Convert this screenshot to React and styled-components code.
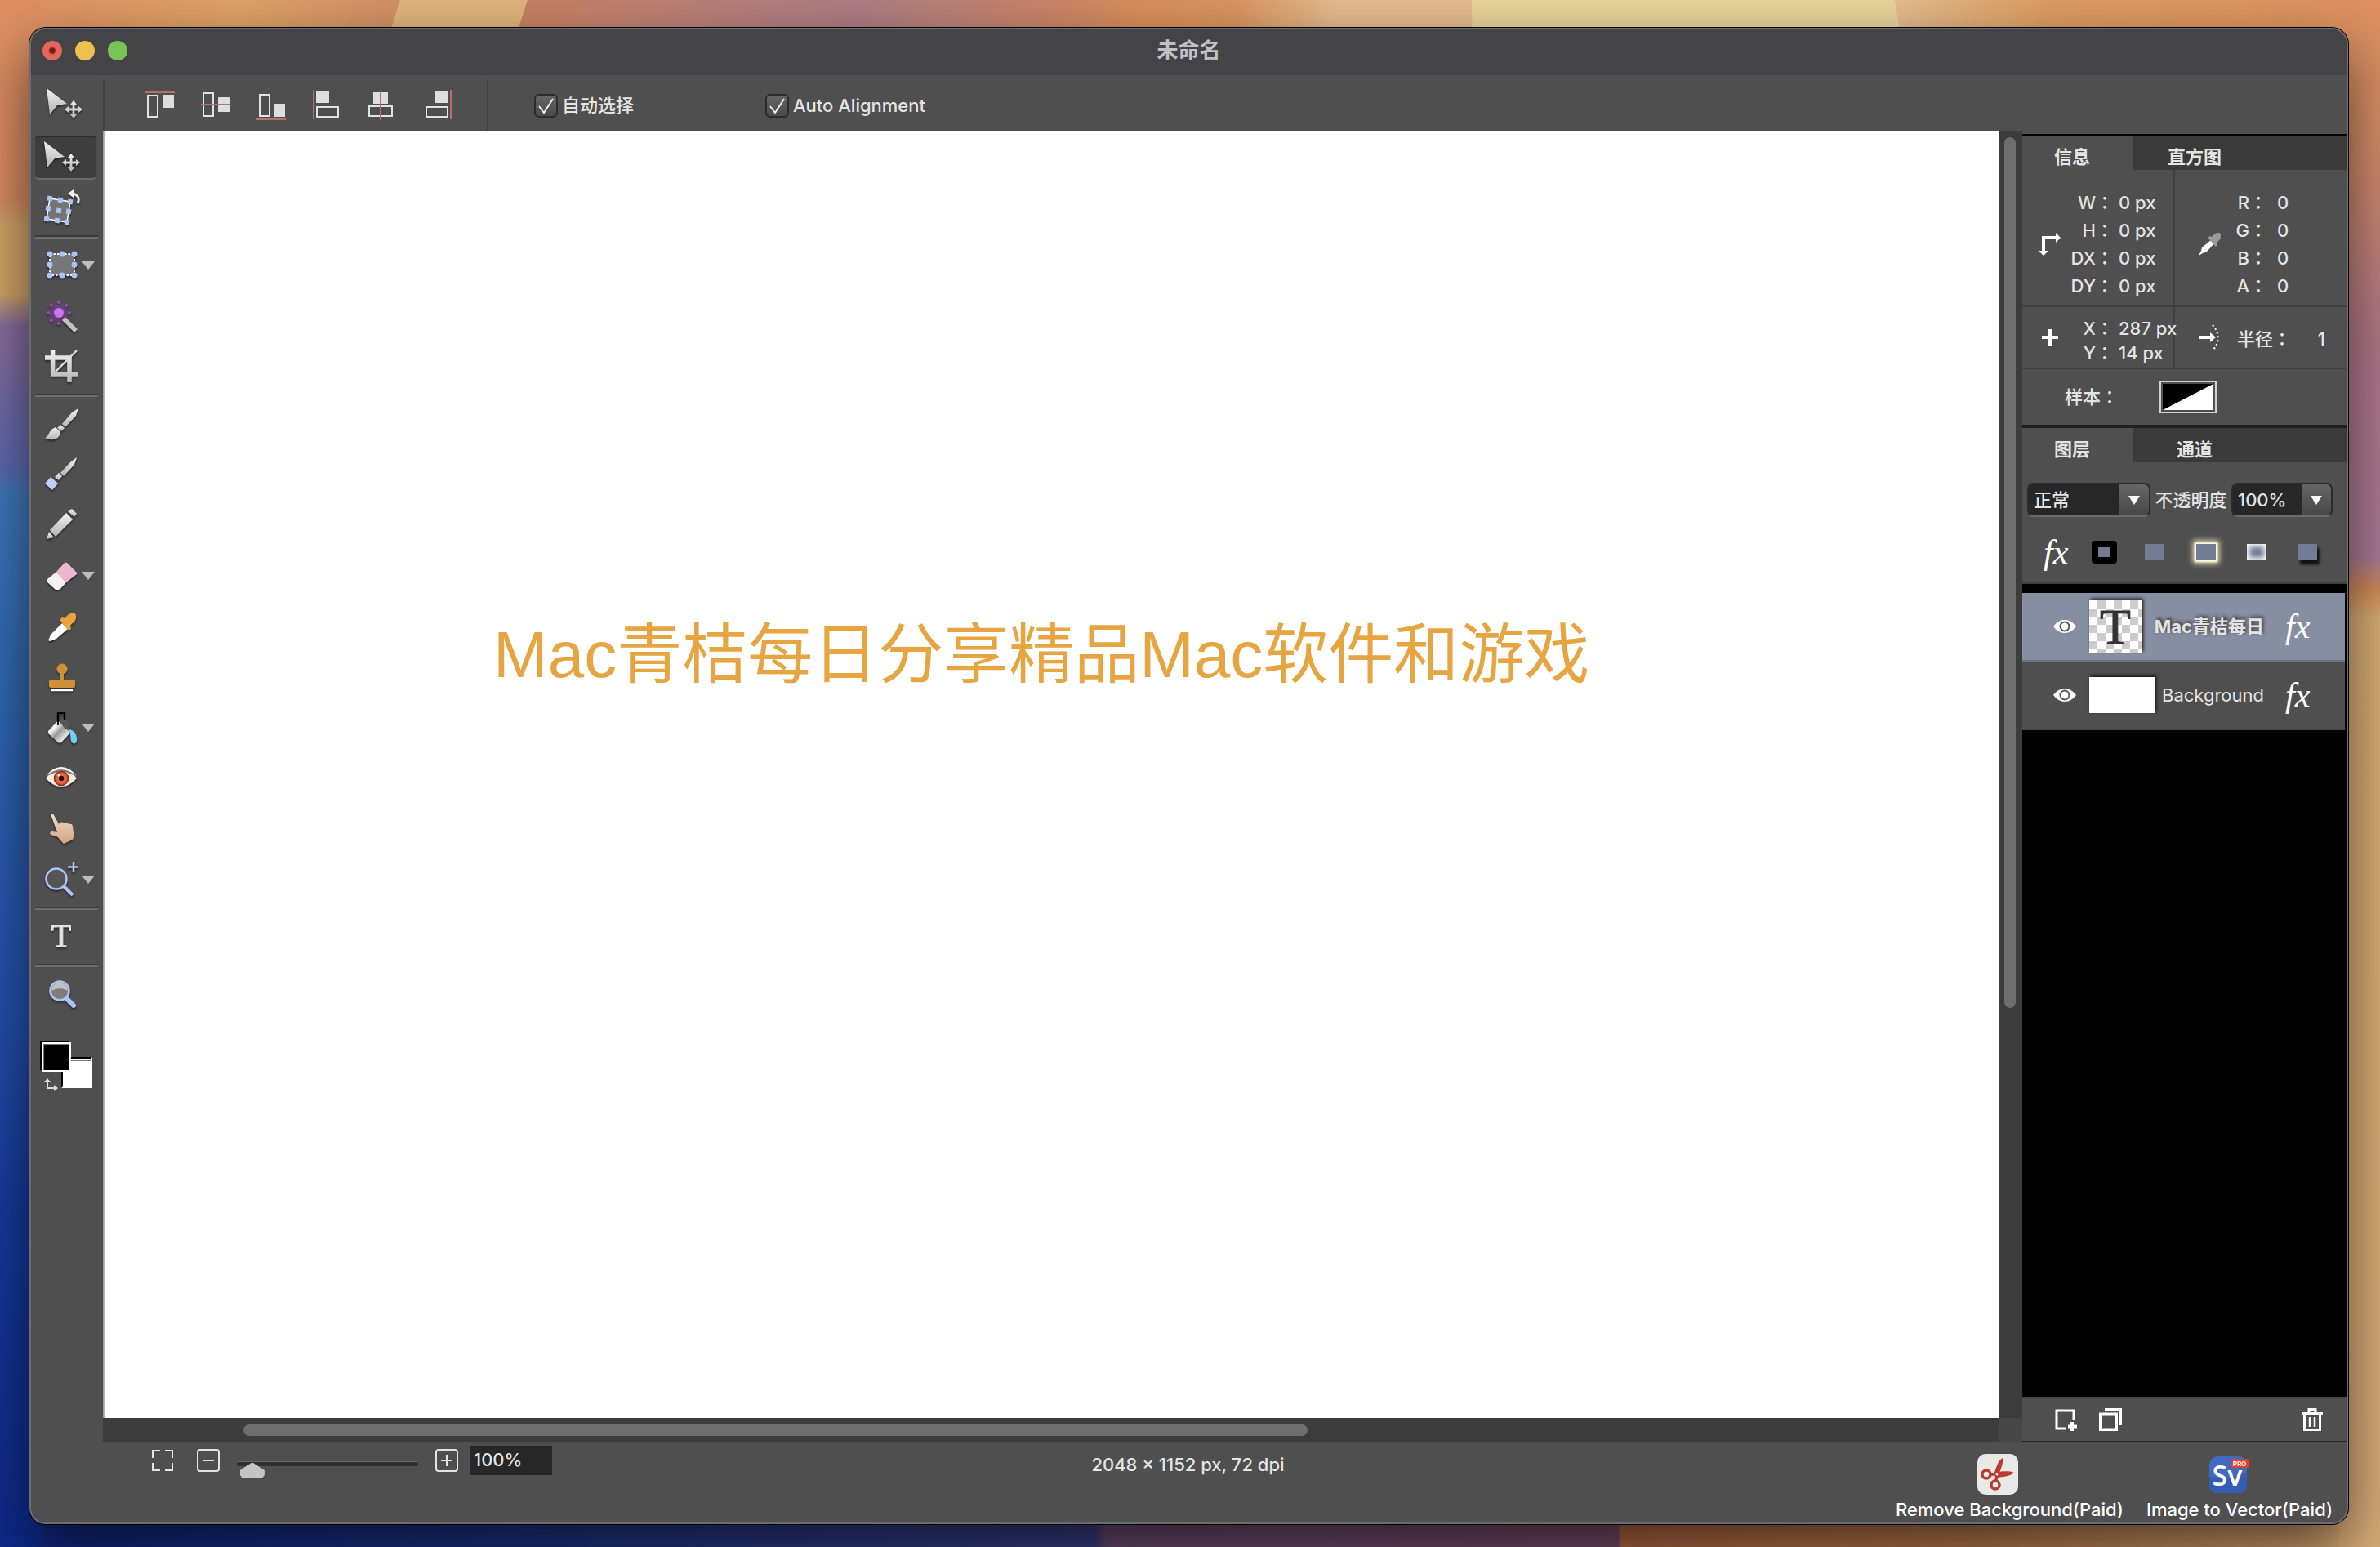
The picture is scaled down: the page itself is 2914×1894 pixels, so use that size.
import { useState } from "react";
import styled, { createGlobalStyle } from "styled-components";


const GlobalStyle = createGlobalStyle`

*, *::before{
    box-sizing: border-box;
}

:root{
    --panel: #4f4f4f;
    --dark: #3c3c3c;
    --field: #272727;
    --text: #e4e4e4;
    --line: #404040;
    --orange: #e7a541;
    --slate: #747c94;
}

body{
    margin: 0;
    background: #c89866;
    color: var(--text);
    font: 500 22px/30px Inter, "Noto Sans CJK SC", sans-serif;
}

button, input, select{
    font: inherit;
    color: inherit;
    margin: 0;
}

button{
    background: none;
    border: 0;
    padding: 0;
    display: block;
}

svg{
    display: block;
}

`

const Desktop = styled.div`
position: relative;
display: flex;
min-height: 100vh;
padding: 34px 39px 28px 36px;
overflow: hidden;
`

const Wallpaper = styled.svg`
position: absolute;
inset: 0;
width: 100%;
height: 100%;
`

const AppWindow = styled.main`
position: relative;
flex: 1;
min-width: 0;
display: flex;
flex-direction: column;
background: var(--panel);
border: 2px solid #6c6c6e;
border-radius: 20px;
box-shadow: 0 0 0 1px #000, 0 30px 70px rgba(0, 0, 0, 0.6);
overflow: hidden;
`

const TitleBar = styled.header`
display: grid;
grid-template-columns: 1fr auto 1fr;
align-items: center;
height: 55px;
padding: 0 14px 2px;
background: #444446;
border-bottom: 1px solid #000;

h1{
    margin: 0;
    font-size: 26px;
    font-weight: 600;
    color: #c2c2c4;
}
`

const Lights = styled.div`
display: flex;
gap: 16px;
`

const Light = styled.button`
width: 24px;
height: 24px;
border-radius: 50%;
background: ${(props) => props.$color};
`

const OptionsBar = styled.section`
display: flex;
align-items: center;
height: 69px;
border-top: 1px solid #444;
`

const CurrentTool = styled.div`
width: 88px;
padding: 4px 0 0 17px;
`

const AlignGroup = styled.div`
display: flex;
align-items: center;
align-self: flex-end;
gap: 28px;
width: 472px;
height: 63px;
padding: 0 0 2px 48px;
border-left: 2px solid var(--line);
border-right: 2px solid var(--line);
`

const CheckLabel = styled.label`
display: flex;
align-items: center;
gap: 5px;
width: 283px;
height: 100%;
padding-top: 6px;
margin-left: ${(props) => props.$first ? "56px" : "0"};
`

const Check = styled.input`
appearance: none;
width: 29px;
height: 29px;
border: 2px solid #2c2c2c;
border-radius: 6px;
background: linear-gradient(#666, #4a4a4a);

&:checked{
    background: url("data:image/svg+xml,%3Csvg xmlns='http://www.w3.org/2000/svg' viewBox='0 0 25 25'%3E%3Cpath d='M4 13l6 8L21 4' fill='none' stroke='%23eee' stroke-width='2'/%3E%3C/svg%3E"), linear-gradient(#666, #4a4a4a);
}
`

const Main = styled.div`
flex: 1;
display: flex;
min-height: 0;
`

const Toolbar = styled.nav`
width: 88px;
padding: 2px 6px 0 5px;
`

const ToolButton = styled.button`
display: flex;
align-items: center;
width: 75px;
height: 62px;
padding: 4px 0;

> span{
    display: flex;
    align-items: center;
    width: 75px;
    height: 54px;
    padding-left: 9px;
    border-radius: 5px;
    background: ${(props) => props.$active ? "#3e3e3e" : "none"};
    border-top: 2px solid ${(props) => props.$active ? "#2c2c2c" : "transparent"};
    border-bottom: 2px solid ${(props) => props.$active ? "#6a6a6a" : "transparent"};
}
`

const ToolDivider = styled.hr`
margin: 2px 0;
height: 4px;
border: 0;
border-top: 2px solid #3a3a3a;
border-bottom: 2px solid #6d6d6d;
`

const ToolIcon = styled.svg`
width: 48px;
height: 48px;
flex: none;
overflow: visible;
filter: drop-shadow(0 2px 1px rgba(0, 0, 0, 0.45));
`

const Swatches = styled.div`
position: relative;
height: 64px;
margin: 28px 0 0 8px;

svg{
    position: absolute;
    left: 2px;
    top: 43px;
}
`

const Swatch = styled.button`
position: absolute;
left: ${(props) => props.$back ? "24px" : "0"};
top: ${(props) => props.$back ? "18px" : "0"};
width: ${(props) => props.$back ? "38px" : "36px"};
height: ${(props) => props.$back ? "38px" : "36px"};
background: ${(props) => props.$back ? "#fff" : "#000"};
border: 2px solid #fff;
border-top-color: ${(props) => props.$back ? "#000" : "#fff"};
border-left-color: ${(props) => props.$back ? "#000" : "#fff"};
box-shadow: ${(props) => props.$back ? "inset 2px 2px #fff, inset 3px 3px #777" : "-2px -2px #000, inset 1px 1px #777"};
`

const Stage = styled.section`
flex: 1;
min-width: 0;
display: grid;
grid-template-columns: 1fr 28px;
grid-template-rows: 1fr 30px;
background: #474747;
`

const Canvas = styled.div`
background: #fff;
padding: 587px 0 0 478px;
min-width: 0;
overflow: hidden;
box-shadow: inset 3px 0 2px -1px #999;

p{
    margin: 0;
    font: 400 80px/110px "Liberation Sans", "Noto Sans CJK SC", sans-serif;
    color: var(--orange);
    white-space: nowrap;
}
`

const ScrollTrack = styled.div`
background: var(--dark);
padding: ${(props) => props.$vertical ? "8px 8px 0 6px" : "8px 14px 8px 172px"};

&::after{
    content: "";
    display: block;
    border-radius: 7px;
    background: #6e6e6e;
    width: ${(props) => props.$vertical ? "14px" : "61%"};
    height: ${(props) => props.$vertical ? "68%" : "14px"};
}
`

const Side = styled.aside`
display: flex;
flex-direction: column;
width: 397px;
margin-top: 4px;
border-top: 2px solid #000;
`

const Tabs = styled.div`
display: grid;
grid-template-columns: 136px 136px 1fr;
height: 42px;
background: #3a3a3a;
`

const Tab = styled.button`
font-weight: 700;
padding: 10px 14px 0 ${(props) => props.$active ? "0" : "28px"};
background: ${(props) => props.$active ? "var(--panel)" : "none"};
`

const InfoPanel = styled.div`
display: grid;
grid-template-columns: 187px 1fr;
border-bottom: 4px solid #1f1f1f;
`

const InfoCell = styled.div`
display: grid;
grid-template-columns: ${(props) => props.$right ? "28px 57px 1fr" : "28px 64px 1fr"};
align-items: center;
height: ${(props) => props.$short ? "76px" : "168px"};
padding: ${(props) => props.$short ? "0" : "16px"} ${(props) => props.$right ? "26px 0 28px" : "0 0 20px"};
border-right: ${(props) => props.$right ? "0" : "2px solid var(--line)"};
border-bottom: 2px solid var(--line);
white-space: nowrap;

dl{
    grid-column: 2 / 4;
    display: grid;
    grid-template-columns: ${(props) => props.$right ? "57px 1fr" : "64px 1fr"};
    column-gap: ${(props) => props.$right ? "12px" : "6px"};
    margin: 0;
    padding-top: ${(props) => props.$short ? "8px" : "0"};
}
dt{
    text-align: right;
    line-height: ${(props) => props.$short ? "30px" : "34px"};
}
dd{
    margin: 0;
    line-height: ${(props) => props.$short ? "30px" : "34px"};
}
`

const Radius = styled.div`
grid-column: 2 / 4;
display: flex;
justify-content: space-between;
padding-left: 20px;
padding-top: 4px;
`

const Colon = styled.span`
font-family: "Noto Sans CJK JP", sans-serif;
line-height: 1;
`

const SampleRow = styled.div`
grid-column: 1 / 3;
display: flex;
align-items: center;
gap: 50px;
height: 68px;
padding-left: 52px;
`

const SampleSwatch = styled.button`
width: 70px;
height: 40px;
border: 2px solid #d0d0d0;
padding: 2px;
`

const BlendRow = styled.div`
display: flex;
align-items: center;
height: 74px;
padding: 18px 17px 0 6px;

label{
    flex: 1;
    text-align: center;
}
`

const SelectBox = styled.div`
display: grid;
grid-template-columns: 1fr 36px;
width: ${(props) => props.$wide ? "151px" : "124px"};
height: 42px;
border: 2px solid #2b2b2b;
border-bottom-color: #6d6d6d;
border-radius: 8px;
background: linear-gradient(90deg, var(--field) calc(100% - 36px), transparent 0), linear-gradient(#666, #474747);
overflow: hidden;

select{
    grid-area: 1 / 1 / 2 / 3;
    appearance: none;
    background: none;
    border: 0;
    padding: 0 0 0 6px;
}
svg{
    grid-area: 1 / 2;
    place-self: center;
    pointer-events: none;
}
`

const EffectsRow = styled.div`
display: flex;
align-items: center;
justify-content: space-between;
height: 75px;
padding: 0 32px 2px 26px;
border-bottom: 2px solid var(--line);
`

const Fx = styled.button`
width: 28px;
font: italic 400 42px/48px "Liberation Serif", serif;
color: #fff;
`

const LayerList = styled.ul`
flex: 1;
margin: 0;
padding: 11px 2px 0 0;
list-style: none;
background: #000;
`

const LayerRow = styled.li`
display: flex;
align-items: center;
height: 84px;
padding: 0 45px 0 38px;
background: ${(props) => props.$selected ? "#868ea1" : "var(--panel)"};
border-bottom: 2px solid ${(props) => props.$selected ? "#6b728a" : "#444"};

> span{
    flex: 1;
    margin-right: 26px;
    text-align: right;
    white-space: nowrap;
    font-weight: ${(props) => props.$selected ? "700" : "400"};
    text-shadow: ${(props) => props.$selected ? "2px -2px 4px #333" : "none"};
}
`

const Thumb = styled.div`
display: grid;
place-items: center;
margin-left: 16px;
width: ${(props) => props.$text ? "64px" : "80px"};
height: ${(props) => props.$text ? "64px" : "44px"};
background: ${(props) => props.$text ? "repeating-conic-gradient(#ccc 0 25%, #fff 0 50%) 0 0 / 20px 20px" : "#fff"};
box-shadow: 2px -2px 4px #111;
font: 400 62px/62px "Liberation Serif", serif;
-webkit-text-stroke: 1px #333;
color: #333;
`

const LayerFooter = styled.footer`
display: flex;
align-items: center;
gap: 27px;
height: 56px;
padding: 0 28px 0 39px;
border-top: 2px solid #444;
border-bottom: 2px solid #222;

button:last-child{
    margin-left: auto;
}
`

const StatusBar = styled.footer`
display: grid;
grid-template-columns: 1fr auto 1fr;
height: 98px;
padding: 4px 17px 0 148px;

> p{
    margin: 8px 0 0;
    padding-right: 133px;
}
`

const ZoomControls = styled.div`
display: flex;
align-items: center;
height: 36px;
`

const ZoomButton = styled.button`
margin-left: ${(props) => props.$spaced ? "29px" : "0"};
`

const ZoomSlider = styled.input`
appearance: none;
width: 222px;
height: 36px;
margin: 0 21px;
padding-top: 8px;
background: none;

&::-webkit-slider-runnable-track{
    height: 6px;
    border-radius: 3px;
    background: #303030;
    border-top: 1px solid #666;
}
&::-webkit-slider-thumb{
    appearance: none;
    width: 30px;
    height: 18px;
    margin-top: 1px;
    background: #c4c4c4;
    clip-path: polygon(0 50%, 46% 0, 54% 0, 100% 50%, 100% 84%, 92% 100%, 8% 100%, 0 84%);
}
`

const ZoomInput = styled.input`
width: 100px;
height: 36px;
margin-left: 15px;
padding: 0 4px 2px;
border: 0;
background: var(--field);
`

const PaidApps = styled.div`
display: flex;
justify-content: flex-end;
align-items: flex-start;
gap: 28px;
`

const PaidApp = styled.a`
display: flex;
flex-direction: column;
align-items: center;
padding-top: 10px;
color: #fff;
text-decoration: none;
white-space: nowrap;

svg{
    margin: 0 28px 3px 0;
}
`


const blue = "#a9c5f7";
const metal = "url(#metal)";

function Defs(){
    return(
        <defs>
            <linearGradient id="metal" x1="0" y1="0" x2="0" y2="1">
                <stop offset="0" stopColor="#f2f2f2" />
                <stop offset="1" stopColor="#b4b4b4" />
            </linearGradient>
            <linearGradient id="grip" x1="0" y1="0" x2="1" y2="1">
                <stop offset="0.1" stopColor="#d0d0d0" />
                <stop offset="0.3" stopColor="#f6f6f6" />
                <stop offset="0.5" stopColor="#999" />
                <stop offset="0.8" stopColor="#f4f4f4" />
            </linearGradient>
            <linearGradient id="skin" x1="0" y1="0" x2="0" y2="1">
                <stop offset="0" stopColor="#f3dcc6" />
                <stop offset="1" stopColor="#cfa384" />
            </linearGradient>
            <radialGradient id="iris">
                <stop offset="0" stopColor="#f08a60" />
                <stop offset="1" stopColor="#d8512c" />
            </radialGradient>
            <radialGradient id="glow">
                <stop offset="0" stopColor="#b050e0" stopOpacity="0.8" />
                <stop offset="1" stopColor="#8030b0" stopOpacity="0" />
            </radialGradient>
        </defs>
    )
}

const squares = [[9, 12], [22, 14], [34, 16], [32, 28], [30, 41], [18, 39], [5, 37], [7, 24], [20, 27]];
const dots = [[9, 10], [24, 10], [39, 10], [9, 23], [39, 23], [9, 36], [24, 36], [39, 36]];

const drawings = {
    move: <g fill={metal}>
        <path d="M2 4 27 23 15 25 6 36Z" />
        <path d="m35 19 4 5h-2.600v4.600h4.600V26l5 4-5 4v-2.600h-4.600V36H39l-4 5-4-5h2.600v-4.600H29V34l-5-4 5-4v2.600h4.600V24H31Z" />
    </g>,
    transform: <g>
        <path d="M9 12 34 16 30 41 5 37Z" fill="#757575" stroke="#fff" strokeWidth="1.600" />
        {squares.map(([x, y]) => <rect key={x + "-" + y} x={x - 3} y={y - 3} width="6" height="6" fill={blue} transform={`rotate(9 ${x} ${y})`} />)}
        <path d="M37 6c6 1 9 6 6 12" fill="none" stroke="#e4e4e4" strokeWidth="3" />
        <path d="m31 6 7-5v10Z" fill="#f2f2f2" />
    </g>,
    marquee: <g>
        <path d="M9 10h30v26H9Z" fill="#777" stroke="#fff" strokeWidth="1.800" strokeDasharray="2.500 2" />
        {dots.map(([x, y]) => <circle key={x + "-" + y} cx={x} cy={y} r="3.500" fill={blue} />)}
    </g>,
    wand: <g>
        <circle cx="20" cy="20" r="17" fill="url(#glow)" />
        {[0, 45, 90, 135, 180, 225, 270, 315].map((a) => <circle key={a} cx="20" cy="7" r="2" fill="#96529f" transform={`rotate(${a} 20 20)`} />)}
        <circle cx="20" cy="20" r="6" fill="#cf74ea" />
        <path d="m26 27 15 15" stroke="#c2c2c2" strokeWidth="5.500" />
    </g>,
    crop: <g fill="none" stroke={metal} strokeWidth="5.600">
        <path d="M12.600 3v30H43M3 13h30v30" />
        <path d="M42 4 16 30" strokeWidth="2.400" stroke="#ddd" />
    </g>,
    brush: <g fill={metal}>
        <path d="m44 5-3 9-13 14-4-4 12-14Z" />
        <path d="m22 25 5 4-4 4-5-4Z" />
        <path d="m16 28 6 6c0 8-10 12-19 7 5-1 4-10 13-13Z" />
    </g>,
    paint: <g fill={metal}>
        <path d="m42 3-3 9-13 14-4-4 12-13Z" />
        <path d="m20 22 4 4-4 5-5-4Z" />
        <path d="m10 27 9 8-7 8-9-8Z" fill="#bcd0fa" />
    </g>,
    pencil: <g fill={metal}>
        <path d="m36 4 6 6-3 4-8-7Z" />
        <path d="m29 9 8 8-21 21-7-8Z" />
        <path d="m8 32 6 7-9 2Z" />
    </g>,
    eraser: <g>
        <path d="m17 19 12 13-7 8q-1 1-3 1h-3L5 31v-2Z" fill="#f2f2f2" />
        <path d="M17 19 27 8q1-1 3 0l12 12v2L29 32Z" fill="#efb4cf" />
    </g>,
    dropper: <g>
        <path d="m24 20 7 7-14 12-8 3-2-1 3-7Z" fill="#fff" />
        <path d="m21 16 3-3 4 1c3-7 13-9 13-3 1 7-5 9-7 12l1 4-3 2Z" fill="#eca13a" />
    </g>,
    stamp: <g fill="#cf9038">
        <circle cx="24" cy="14" r="6.500" />
        <path d="M22 18h4v9h-4Z" />
        <rect x="8" y="27" width="32" height="10" rx="2.500" />
        <path d="M11 40h26" stroke="#fff" strokeWidth="2.500" />
    </g>,
    bucket: <g>
        <path d="m19 15 15 15-11 12q-2 1-4 0L7 31v-3Z" fill="url(#grip)" />
        <path d="M22 14c7-5 12 4 12 14-7-2-12-8-12-14Z" fill="#555" />
        <path d="M19 21V6h8v9" fill="none" stroke="#000" strokeWidth="2.200" />
        <path d="M31 26c8 0 12 8 11 14-1 5-6 4-7 0-1-6 0-9-4-14Z" fill="#74cdf6" />
    </g>,
    eye: <g>
        <path d="M4 24Q13 12 23 12T42 24Q33 34 23 34T4 24Z" fill="#fbeae3" />
        <path d="M4 22Q13 11 23 11T42 22Q32 16 23 16T4 22Z" fill="#8a7470" />
        <path d="M4 21Q13 10 23 10T42 21Q32 13 23 13T4 21Z" fill="#fff" />
        <circle cx="23" cy="24" r="8.500" fill="url(#iris)" stroke="#8b3220" strokeWidth="1.600" />
        <circle cx="23" cy="24" r="3.200" fill="#300" />
        <circle cx="20" cy="20" r="1.500" fill="#fff" />
    </g>,
    hand: <path d="M10 6c1-2 3-1 4 1l6 11c1-3 5-3 6-1 2-2 5-1 6 1 3-1 5 0 5 3 1 7 2 12 0 16l-11 5c-4-3-5-7-9-9l-7-2c-2-2 0-4 2-4l6 1Z" fill="url(#skin)" />,
    zoomPlus: <g fill="none" stroke={blue}>
        <circle cx="17" cy="23" r="12.500" fill="#555" strokeWidth="2.600" />
        <path d="m26 32 11 11" strokeWidth="4" />
        <path d="M38 2v13M31 8.500h13" strokeWidth="2.600" />
    </g>,
    text: <text x="23" y="36" textAnchor="middle" fontFamily="Liberation Serif, serif" fontSize="40" fontWeight="400" stroke="#e2e2e2" fill="#e2e2e2">T</text>,
    magnifier: <g>
        <path d="m30 30 8 8" stroke={blue} strokeWidth="6" strokeLinecap="round" />
        <circle cx="21" cy="20" r="11.500" fill="#7d7d7d" stroke={blue} strokeWidth="2.600" />
        <path d="M11 20a10 10 0 0 1 20 0q-10-6-20 0Z" fill="#c0c0bd" />
    </g>,
};

const toolGroups = [
    [["move", "移动"], ["transform", "变换"]],
    [["marquee", "选框", true], ["wand", "魔棒"], ["crop", "裁剪"]],
    [["brush", "画笔"], ["paint", "混合画笔"], ["pencil", "铅笔"], ["eraser", "橡皮擦", true], ["dropper", "吸管"], ["stamp", "图章"], ["bucket", "油漆桶", true], ["eye", "红眼"], ["hand", "涂抹"], ["zoomPlus", "减淡", true]],
    [["text", "文字"]],
    [["magnifier", "缩放"]],
];

function Icon({name}){
    return <ToolIcon viewBox="0 0 48 48" aria-hidden="true">{drawings[name]}</ToolIcon>
}

function Tools({active, setActive}){
    return(
        <Toolbar>
            {toolGroups.map((group, i) => (
                <div key={i}>
                    {i > 0 && <ToolDivider />}
                    {group.map(([name, title, more]) => (
                        <ToolButton key={name} aria-label={title} $active={active === name} onClick={() => setActive(name)}>
                            <span>
                                <Icon name={name} />
                                {more && <svg width="16" height="10" viewBox="0 0 16 10"><path d="M0 0h16L8 10Z" fill="#bdbdbd" /></svg>}
                            </span>
                        </ToolButton>
                    ))}
                </div>
            ))}
            <Swatches>
                <Swatch $back aria-label="背景色" />
                <Swatch aria-label="前景色" />
                <svg width="20" height="20" viewBox="0 0 20 20"><path d="M5 5v8h9" fill="none" stroke="#ddd" strokeWidth="2" /><path d="M1 6 5 1l4 5ZM13 9l5 4-5 4Z" fill="#ddd" /></svg>
            </Swatches>
        </Toolbar>
    )
}

const aligns = [
    ["顶对齐", "M5 9h12v26H5Z", "M23 8h14v16H23Z", "M2 5h36"],
    ["垂直居中", "M5 6h12v28H5Z", "M23 11h14v18H23Z", "M2 20h36"],
    ["底对齐", "M6 8h12v26H6Z", "M23 19h14v16H23Z", "M2 38h36"],
    ["左对齐", "M8 23h26v12H8Z", "M7 4h16v14H7Z", "M4 2v36"],
    ["水平居中", "M4 22h28v12H4Z", "M9 5h18v14H9Z", "M18 3v36"],
    ["右对齐", "M6 23h26v12H6Z", "M17 4h16v14H17Z", "M36 2v36"],
];

function Options({tool}){
    return(
        <OptionsBar>
            <CurrentTool><Icon name={tool} /></CurrentTool>
            <AlignGroup>
                {aligns.map(([title, box, fill, rule]) => (
                    <button key={title} aria-label={title}>
                        <svg width="40" height="40" viewBox="0 0 40 40">
                            <path d={box} fill="none" stroke="#e2e2e2" strokeWidth="2" />
                            <path d={fill} fill="#dedede" />
                            <path d={rule} stroke="#b9706c" strokeWidth="2" />
                        </svg>
                    </button>
                ))}
            </AlignGroup>
            <CheckLabel $first><Check type="checkbox" defaultChecked />自动选择</CheckLabel>
            <CheckLabel><Check type="checkbox" defaultChecked />Auto Alignment</CheckLabel>
        </OptionsBar>
    )
}

function Values({rows}){
    return(
        <dl>
            {rows.map(([label, value]) => [
                <dt key={label}>{label}<Colon>：</Colon></dt>,
                <dd key={label + "v"}>{value}</dd>
            ])}
        </dl>
    )
}

function Info(){
    return(
        <>
            <Tabs>
                <Tab $active>信息</Tab>
                <Tab>直方图</Tab>
            </Tabs>
            <InfoPanel>
                <InfoCell>
                    <svg width="28" height="28" viewBox="0 0 28 28"><path d="M6 23V6h16" fill="none" stroke="#fff" strokeWidth="4" /><path d="m21 0 6 6-6 6ZM0 22h12l-6 6Z" fill="#fff" /></svg>
                    <Values rows={[["W", "0 px"], ["H", "0 px"], ["DX", "0 px"], ["DY", "0 px"]]} />
                </InfoCell>
                <InfoCell $right>
                    <svg width="28" height="28" viewBox="0 0 28 28"><path d="m16 9 4 4-9 10-5 2-5 3 3-6 1-4Z" fill="#fff" /><path d="m12 6 3-2 2 1c4-6 11-7 11-2 1 5-3 7-5 9l1 3-2 2Z" fill="#9a9a9a" /></svg>
                    <Values rows={[["R", "0"], ["G", "0"], ["B", "0"], ["A", "0"]]} />
                </InfoCell>
                <InfoCell $short>
                    <svg width="28" height="28" viewBox="0 0 28 28"><path d="M14 4v20M4 14h20" stroke="#fff" strokeWidth="4" /></svg>
                    <Values rows={[["X", "287 px"], ["Y", "14 px"]]} />
                </InfoCell>
                <InfoCell $right $short>
                    <svg width="28" height="32" viewBox="0 0 28 32"><path d="M2 16h14" stroke="#fff" strokeWidth="4" /><path d="m15 10 7 6-7 6Z" fill="#fff" /><path d="M18 1q13 15 1 30" fill="none" stroke="#fff" strokeWidth="2" strokeDasharray="2 3" /></svg>
                    <Radius><span>半径<Colon>：</Colon></span><span>1</span></Radius>
                </InfoCell>
                <SampleRow>
                    <span>样本<Colon>：</Colon></span>
                    <SampleSwatch aria-label="样本">
                        <svg width="62" height="32" viewBox="0 0 62 32"><path d="M0 0h62v32H0Z" fill="#fff" /><path d="M0 0h62L0 32Z" /></svg>
                    </SampleSwatch>
                </SampleRow>
            </InfoPanel>
        </>
    )
}

function Arrow(){
    return <svg width="14" height="11" viewBox="0 0 14 11"><path d="M0 0h14L7 11Z" fill="#fff" /></svg>
}

const EffectButton = styled.button`
width: 32px;
height: 32px;
display: grid;
place-items: center;

&::before{
    content: "";
    width: 24px;
    height: 20px;
    background: var(--slate);
    ${(props) => props.$kind === "stroke" && "width: 31px; height: 28px; border: 8px solid #000; border-radius: 4px;"}
    ${(props) => props.$kind === "outer" && "box-shadow: 0 0 2px 2px #fffbe8, 0 0 7px 4px #e8e2b0;"}
    ${(props) => props.$kind === "inner" && "box-shadow: inset 0 0 6px 3px #fff;"}
    ${(props) => props.$kind === "shadow" && "box-shadow: 3px 5px 3px #111;"}
}
`

function Eye(){
    return(
        <svg width="28" height="18" viewBox="0 0 28 18">
            <path d="M0 9Q6 1 14 1t14 8q-6 8-14 8T0 9Z" fill="#fff" />
            <circle cx="14" cy="9" r="5.500" fill="none" stroke="#555" strokeWidth="2" />
        </svg>
    )
}

function Layers(){
    return(
        <>
            <Tabs>
                <Tab $active>图层</Tab>
                <Tab>通道</Tab>
            </Tabs>
            <BlendRow>
                <SelectBox $wide>
                    <select aria-label="混合模式"><option>正常</option></select>
                    <Arrow />
                </SelectBox>
                <label htmlFor="opacity">不透明度</label>
                <SelectBox>
                    <select id="opacity"><option>100%</option></select>
                    <Arrow />
                </SelectBox>
            </BlendRow>
            <EffectsRow>
                <Fx>fx</Fx>
                <EffectButton $kind="stroke" aria-label="描边" />
                <EffectButton aria-label="填充" />
                <EffectButton $kind="outer" aria-label="外发光" />
                <EffectButton $kind="inner" aria-label="内发光" />
                <EffectButton $kind="shadow" aria-label="阴影" />
            </EffectsRow>
            <LayerList>
                <LayerRow $selected>
                    <button aria-label="显示图层"><Eye /></button>
                    <Thumb $text>T</Thumb>
                    <span>Mac青桔每日</span>
                    <Fx>fx</Fx>
                </LayerRow>
                <LayerRow>
                    <button aria-label="显示图层"><Eye /></button>
                    <Thumb />
                    <span>Background</span>
                    <Fx>fx</Fx>
                </LayerRow>
            </LayerList>
            <LayerFooter>
                <button aria-label="新建图层">
                    <svg width="28" height="28" viewBox="0 0 28 28" fill="none" stroke="#fff"><path d="M14 25H3V3h21v12" strokeWidth="3" /><path d="M22 17v11M17 22.500h11" strokeWidth="4" /></svg>
                </button>
                <button aria-label="复制图层">
                    <svg width="28" height="28" viewBox="0 0 28 28" fill="none" stroke="#fff" strokeWidth="3"><path d="M7 1.500h19.500V21" /><path d="M2 7.500h19v19H2Z" strokeWidth="4" /></svg>
                </button>
                <button aria-label="删除图层">
                    <svg width="28" height="28" viewBox="0 0 28 28" fill="none" stroke="#fff" strokeWidth="3"><path d="M1 6.500h26M10 6V1.500h8V6M4.500 7v19.500h19V7" /><path d="M11 11v12M17 11v12" strokeWidth="2.500" /></svg>
                </button>
            </LayerFooter>
        </>
    )
}

function Status(){
    return(
        <StatusBar>
            <ZoomControls>
                <button aria-label="适合窗口">
                    <svg width="26" height="26" viewBox="0 0 26 26"><path d="M1 10V1h9M16 1h9v9M25 16v9h-9M10 25H1v-9" fill="none" stroke="#e4e4e4" strokeWidth="2" /></svg>
                </button>
                <ZoomButton $spaced aria-label="缩小">
                    <svg width="28" height="28" viewBox="0 0 28 28" fill="none" stroke="#e4e4e4" strokeWidth="2"><rect x="1" y="1" width="26" height="26" rx="3" /><path d="M7 14h14" /></svg>
                </ZoomButton>
                <ZoomSlider type="range" aria-label="缩放" min="0" max="100" defaultValue="2" />
                <ZoomButton aria-label="放大">
                    <svg width="28" height="28" viewBox="0 0 28 28" fill="none" stroke="#e4e4e4" strokeWidth="2"><rect x="1" y="1" width="26" height="26" rx="3" /><path d="M7 14h14M14 7v14" /></svg>
                </ZoomButton>
                <ZoomInput aria-label="缩放比例" defaultValue="100%" />
            </ZoomControls>
            <p>2048 × 1152 px, 72 dpi</p>
            <PaidApps>
                <PaidApp href="#remove">
                    <svg width="50" height="50" viewBox="0 0 50 50">
                        <rect width="50" height="50" rx="10" fill="#e9e9e6" />
                        <g fill="none" stroke="#b93a32" strokeWidth="3.500">
                            <circle cx="11" cy="25" r="5" />
                            <circle cx="22" cy="38" r="5" />
                            <path d="m16 25 9 0M23 33l1-9" />
                        </g>
                        <path d="M20 26C23 17 25 8 31 5c1 8-3 15-5 20ZM22 22c8 0 15-2 23 1-6 5-14 5-22 6Z" fill="#b93a32" />
                        <circle cx="24" cy="25" r="1.500" fill="#eee" />
                    </svg>
                    Remove Background(Paid)
                </PaidApp>
                <PaidApp href="#vector">
                    <svg width="50" height="50" viewBox="0 0 50 50">
                        <rect x="2" y="3" width="46" height="45" rx="10" fill="#4169c0" />
                        <path d="M2 28q23 6 46-6v16q0 10-10 10H12Q2 48 2 38Z" fill="#365bb2" />
                        <text x="24" y="39" textAnchor="middle" fontFamily="Open Sans, sans-serif" fontSize="34" fontWeight="600" fill="#fff">Sv</text>
                        <rect x="29" y="6" width="21" height="11" rx="2" fill="#d9432f" />
                        <text x="39" y="15" textAnchor="middle" fontFamily="Inter, sans-serif" fontSize="8" fontWeight="600" fill="#fff">PRO</text>
                    </svg>
                    Image to Vector(Paid)
                </PaidApp>
            </PaidApps>
        </StatusBar>
    )
}

function Backdrop(){
    return(
        <Wallpaper viewBox="0 0 2914 1894" preserveAspectRatio="none" aria-hidden="true">
            <Defs />
            <defs>
                <linearGradient id="top">
                    <stop offset="0" stopColor="#de8f62" />
                    <stop offset="0.1" stopColor="#dda266" />
                    <stop offset="0.22" stopColor="#c98266" />
                    <stop offset="0.36" stopColor="#ac7c84" />
                    <stop offset="0.44" stopColor="#c98468" />
                    <stop offset="0.48" stopColor="#d98f5c" />
                    <stop offset="0.52" stopColor="#d99560" />
                    <stop offset="0.56" stopColor="#e3ba8c" />
                    <stop offset="0.8" stopColor="#e3ba8c" />
                    <stop offset="0.86" stopColor="#dc9c62" />
                    <stop offset="1" stopColor="#de9060" />
                </linearGradient>
                <linearGradient id="left" x1="0" y1="0" x2="0" y2="1">
                    <stop offset="0" stopColor="#de8f62" />
                    <stop offset="0.13" stopColor="#d88b62" />
                    <stop offset="0.145" stopColor="#d3a468" />
                    <stop offset="0.19" stopColor="#d3a468" />
                    <stop offset="0.21" stopColor="#8a6f9c" />
                    <stop offset="0.3" stopColor="#5f69b0" />
                    <stop offset="0.32" stopColor="#3f78bd" />
                    <stop offset="0.46" stopColor="#2f66b0" />
                    <stop offset="0.65" stopColor="#2350ac" />
                    <stop offset="0.78" stopColor="#163a9e" />
                    <stop offset="1" stopColor="#0e2a8c" />
                </linearGradient>
                <linearGradient id="right" x1="0" y1="0" x2="0" y2="1">
                    <stop offset="0" stopColor="#de9060" />
                    <stop offset="0.1" stopColor="#d28c68" />
                    <stop offset="0.22" stopColor="#b0788a" />
                    <stop offset="0.36" stopColor="#a97a94" />
                    <stop offset="0.38" stopColor="#d08a58" />
                    <stop offset="0.4" stopColor="#d8ae74" />
                    <stop offset="1" stopColor="#d8ac78" />
                </linearGradient>
                <linearGradient id="bottom">
                    <stop offset="0" stopColor="#0f2680" />
                    <stop offset="0.24" stopColor="#1e3484" />
                    <stop offset="0.46" stopColor="#3a3f80" />
                    <stop offset="0.465" stopColor="#6a4a70" />
                    <stop offset="0.68" stopColor="#774c66" />
                    <stop offset="0.681" stopColor="#b36a44" />
                    <stop offset="0.83" stopColor="#b87c50" />
                    <stop offset="1" stopColor="#d8ac78" />
                </linearGradient>
            </defs>
            <path d="M0 0h2914v950H0Z" fill="url(#top)" />
            <path d="M490 0h156l-60 190H430Z" fill="#e1b47c" />
            <path d="M646 0h64l-70 190h-54Z" fill="#c68064" />
            <path d="M1802 0h518l30 190h-546Z" fill="#e8d49b" />
            <path d="M0 1860h2914v34H0Z" fill="url(#bottom)" />
            <path d="M0 0h50v1894H0Z" fill="url(#left)" />
            <path d="M2864 0h50v1894h-50Z" fill="url(#right)" />
        </Wallpaper>
    )
}

function App(){

    const [tool, setTool] = useState("move");

    return(
        <Desktop>
            <GlobalStyle />
            <Backdrop />
            <AppWindow>
                <TitleBar>
                    <Lights>
                        <Light $color="radial-gradient(circle, #7d1a12 3px, #e2685c 5px)" aria-label="关闭" />
                        <Light $color="#efbf4f" aria-label="最小化" />
                        <Light $color="#78c556" aria-label="全屏" />
                    </Lights>
                    <h1>未命名</h1>
                </TitleBar>
                <Options tool={tool} />
                <Main>
                    <Tools active={tool} setActive={setTool} />
                    <Stage>
                        <Canvas><p>Mac青桔每日分享精品Mac软件和游戏</p></Canvas>
                        <ScrollTrack $vertical />
                        <ScrollTrack />
                    </Stage>
                    <Side>
                        <Info />
                        <Layers />
                    </Side>
                </Main>
                <Status />
            </AppWindow>
        </Desktop>
    )
}
export default App
